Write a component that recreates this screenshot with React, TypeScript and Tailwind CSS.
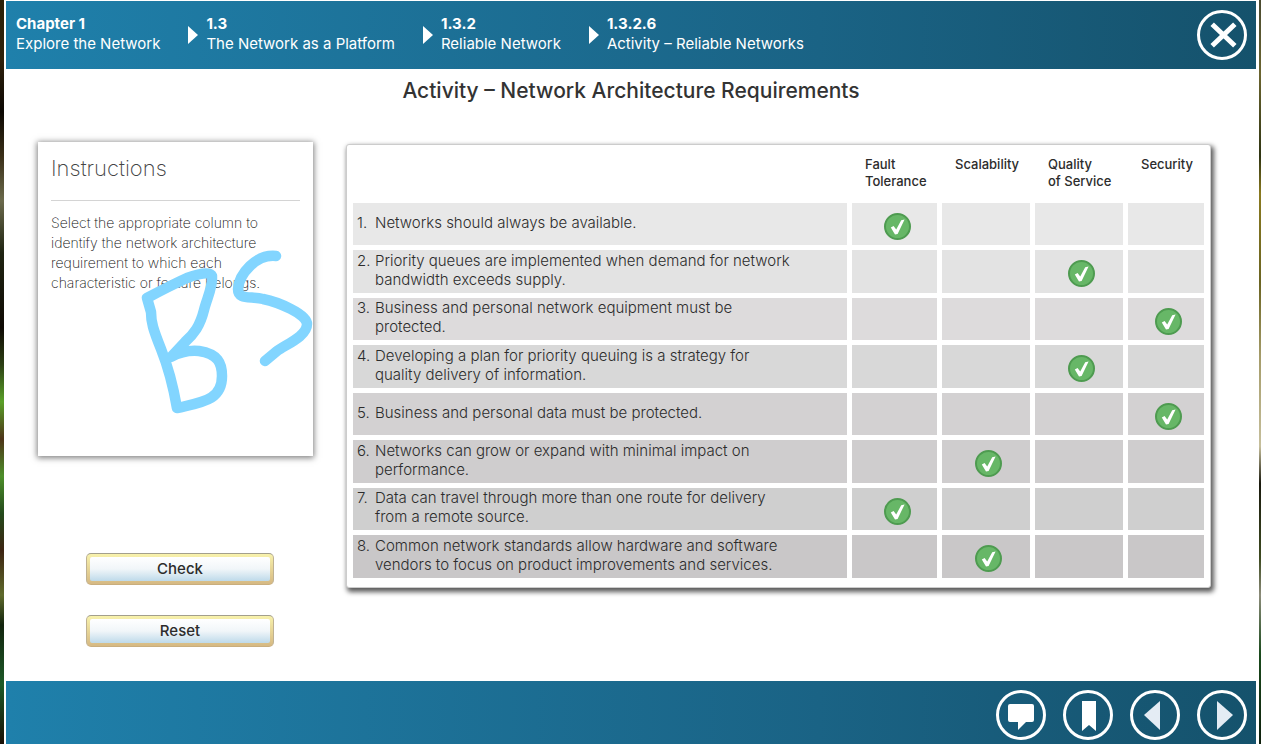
import { useState } from "react";

const crumbs = [
  { id: "Chapter 1", title: "Explore the Network" },
  { id: "1.3", title: "The Network as a Platform" },
  { id: "1.3.2", title: "Reliable Network" },
  { id: "1.3.2.6", title: "Activity – Reliable Networks" },
];

const columns = ["Fault\nTolerance", "Scalability", "Quality\nof Service", "Security"];

const questions = [
  { text: "Networks should always be available.", shade: "bg-[#e8e8e8]", answer: 0 },
  { text: "Priority queues are implemented when demand for network\nbandwidth exceeds supply.", shade: "bg-[#e3e3e3]", answer: 2 },
  { text: "Business and personal network equipment must be\nprotected.", shade: "bg-[#dddbdc]", answer: 3 },
  { text: "Developing a plan for priority queuing is a strategy for\nquality delivery of information.", shade: "bg-[#d8d8d8]", answer: 2 },
  { text: "Business and personal data must be protected.", shade: "bg-[#d3d1d2]", answer: 3 },
  { text: "Networks can grow or expand with minimal impact on\nperformance.", shade: "bg-[#cfcdce]", answer: 1 },
  { text: "Data can travel through more than one route for delivery\nfrom a remote source.", shade: "bg-[#cfcfcf]", answer: 0 },
  { text: "Common network standards allow hardware and software\nvendors to focus on product improvements and services.", shade: "bg-[#c9c7c8]", answer: 1 },
];

const solved = questions.map((q) => q.answer);

function CheckMark() {
  return (
    <svg viewBox="0 0 27 27" className="size-[27px]" aria-hidden="true">
      <circle cx="13.5" cy="13.5" r="12.5" fill="#67b767" stroke="#4e9b50" strokeWidth="2" />
      <path d="M6.8 14.6 9.6 13l2.6 3.6 5-9.4 3.4-.8-7 14.6-2.6.6z" fill="#fff" />
    </svg>
  );
}

const roundButton =
  "flex size-[50px] items-center justify-center rounded-full border-[3px] border-white text-white";

const pushButton =
  "h-8 w-[188px] rounded-[5px] border border-t-[#a39f8c] border-x-[#bfb293] border-b-[#c9ae7e] bg-linear-to-b from-[#f8f2ac] to-[#d6b983] p-[3px] text-[15px] font-medium leading-5 text-[#2c2c2c]";

function PushButton({ label, onClick }: { label: string; onClick: () => void }) {
  return (
    <button type="button" onClick={onClick} className={pushButton}>
      <span className="flex h-full items-center justify-center rounded-[2px] bg-linear-to-b from-white via-[#f1f6f9] to-[#bedaea]">
        {label}
      </span>
    </button>
  );
}

export default function App() {
  const [picked, setPicked] = useState<(number | null)[]>(solved);

  return (
    <div className="flex min-h-screen bg-white font-['Inter','Liberation_Sans',sans-serif]">
      <div className="w-1 shrink-0 bg-[linear-gradient(to_bottom,#2c2008_0%,#2e200c_8%,#0c0803_15%,#3a2f18_21%,#6b6a4c_27%,#1f2412_34%,#0f0a04_44%,#2c3f14_49%,#5aa028_54%,#4d3418_59%,#4d8f2a_64%,#244a1c_69%,#3d2412_74%,#5f6a2c_80%,#12240e_84%,#1d5a28_92%,#1a0f06_100%)]" />
      <div className="flex min-w-0 flex-1 flex-col pt-px pr-[3px] pl-0.5">
        <header className="flex h-[68px] items-center bg-linear-to-r from-[#1f80ab] via-[#1a6385] via-65% to-[#15526c] pr-[9px] pl-2.5 text-white">
          <nav aria-label="Breadcrumb" className="flex flex-1">
            {crumbs.map((c, i) => (
              <a key={c.id} href="#" className="flex items-center gap-2 whitespace-nowrap">
                {i > 0 && (
                  <svg viewBox="0 0 10 20" className="ml-7 h-5 w-2.5" aria-hidden="true">
                    <path d="M0 1v18l10-9z" fill="#fff" />
                  </svg>
                )}
                <span className="pb-0.5 text-[15px] leading-5">
                  <span className="block font-bold">{c.id}</span>
                  {c.title}
                </span>
              </a>
            ))}
          </nav>
          <button type="button" aria-label="Close" className={roundButton}>
            <svg viewBox="0 0 50 50" className="size-[50px] shrink-0" aria-hidden="true">
              <path d="M17 16l19 18M36 16L17 34" stroke="#fff" strokeWidth="5" strokeLinecap="square" />
            </svg>
          </button>
        </header>

        <main className="flex-1">
          <h1 className="pt-2 text-center text-[21px] leading-7 font-[450] text-[#333]">
            Activity – Network Architecture Requirements
          </h1>

          <div className="flex gap-[33px] pt-[37px] pr-[45px] pl-8">
            <div className="flex w-[275px] shrink-0 flex-col">
              <section className="relative h-[314px] bg-white px-[13px] pt-3 shadow-[0_1px_6px_1px_rgba(0,0,0,0.5)]">
                <h2 className="text-[22px] leading-7 font-extralight text-[#444]">Instructions</h2>
                <hr className="mt-[18px] border-[#d4d4d4]" />
                <p className="pt-3 text-sm leading-5 font-extralight whitespace-pre-line text-[#111]">
                  {"Select the appropriate column to\nidentify the network architecture\nrequirement to which each\ncharacteristic or feature belongs."}
                </p>
                <svg viewBox="0 0 275 314" className="absolute inset-0 size-full overflow-visible" aria-hidden="true">
                  <g fill="none" stroke="#82d5ff" strokeWidth="10.5" strokeLinecap="round" strokeLinejoin="round">
                    <path d="M139 266C135 243 131 227 123 207C115 187 113 180 113 170L109 156C124 148 138 141 149 136C160 132 172 129 174 134C175 145 169 156 166 168C162 184 156 192 147 200L133 215C142 210 150 208 161 209C180 212 184 221 184 234C184 258 165 260 140 266" />
                    <path d="M238 114C218 112 201 132 200 147C200 158 212 154 225 157C240 160 269 172 269 182C269 194 249 202 239 209L227 219" />
                  </g>
                </svg>
              </section>
              <div className="flex flex-col gap-[30px] pt-[97px] pl-12">
                <PushButton label="Check" onClick={() => setPicked(solved)} />
                <PushButton label="Reset" onClick={() => setPicked(questions.map(() => null))} />
              </div>
            </div>

            <div className="mt-0.5 min-w-0 flex-1 self-start rounded-[3px] border border-[#ccc] bg-white px-px pb-1 shadow-[2px_3px_5px_1px_rgba(0,0,0,0.65)]">
              <table className="w-full table-fixed border-separate border-spacing-[5px] text-[#2c2c2c]">
                <colgroup>
                  <col />
                  <col className="w-[85px]" />
                  <col className="w-[88px]" />
                  <col className="w-[88px]" />
                  <col className="w-[76px]" />
                </colgroup>
                <thead>
                  <tr className="h-12">
                    <td />
                    {columns.map((c) => (
                      <th key={c} scope="col" className="pt-1.5 pl-[13px] text-left align-top text-[13px] leading-[17px] font-medium whitespace-pre-line">
                        {c}
                      </th>
                    ))}
                  </tr>
                </thead>
                <tbody>
                  {questions.map((q, row) => (
                    <tr key={q.text} className={`h-[42px] even:h-[43px] ${q.shade}`}>
                      <th scope="row" className="px-1 pt-0 pb-1 text-left text-[15px] leading-[19px] font-light">
                        <span className="flex">
                          <span className="w-[18px] shrink-0">{row + 1}.</span>
                          <span className="whitespace-pre-line">{q.text}</span>
                        </span>
                      </th>
                      {columns.map((c, col) => (
                        <td key={c} className="p-0">
                          <button
                            type="button"
                            aria-label={c}
                            aria-pressed={picked[row] === col}
                            onClick={() => setPicked(picked.map((p, i) => (i === row ? col : p)))}
                            className="flex h-[42px] w-full items-center justify-center pt-1 pl-[5px]"
                          >
                            {picked[row] === col && <CheckMark />}
                          </button>
                        </td>
                      ))}
                    </tr>
                  ))}
                </tbody>
              </table>
            </div>
          </div>
        </main>

        <footer className="flex h-[63px] items-start justify-end gap-[17px] bg-linear-to-r from-[#1f80ab] via-[#1a6385] via-65% to-[#15526c] pt-[9px] pr-[9px]">
          <button type="button" aria-label="Comments" className={roundButton}>
            <svg viewBox="0 0 50 50" className="size-[50px] shrink-0" aria-hidden="true">
              <path d="M14 14h22a2 2 0 0 1 2 2v14a2 2 0 0 1-2 2h-6l-8 8v-8h-8a2 2 0 0 1-2-2V16a2 2 0 0 1 2-2z" fill="#fff" />
            </svg>
          </button>
          <button type="button" aria-label="Bookmark" className={roundButton}>
            <svg viewBox="0 0 50 50" className="size-[50px] shrink-0" aria-hidden="true">
              <path d="M19 11h14v30l-7-6-7 6z" fill="#fff" />
            </svg>
          </button>
          <button type="button" aria-label="Previous" className={roundButton}>
            <svg viewBox="0 0 50 50" className="size-[50px] shrink-0" aria-hidden="true">
              <path d="M30 11v29L14 25z" fill="#e4ecf4" />
            </svg>
          </button>
          <button type="button" aria-label="Next" className={roundButton}>
            <svg viewBox="0 0 50 50" className="size-[50px] shrink-0" aria-hidden="true">
              <path d="M20 11v29l16-15z" fill="#e4ecf4" />
            </svg>
          </button>
        </footer>
      </div>
      <div className="w-0.5 shrink-0 bg-[linear-gradient(to_bottom,#4a4a30_0%,#6b6530_10%,#2f3412_21%,#8a7a20_26%,#6b6422_38%,#a59c6a_48%,#c6bf9c_60%,#1a1a0e_65%,#3d4a20_75%,#8c8c7a_80%,#1a4a1c_88%,#0f1f0c_100%)]" />
    </div>
  );
}
